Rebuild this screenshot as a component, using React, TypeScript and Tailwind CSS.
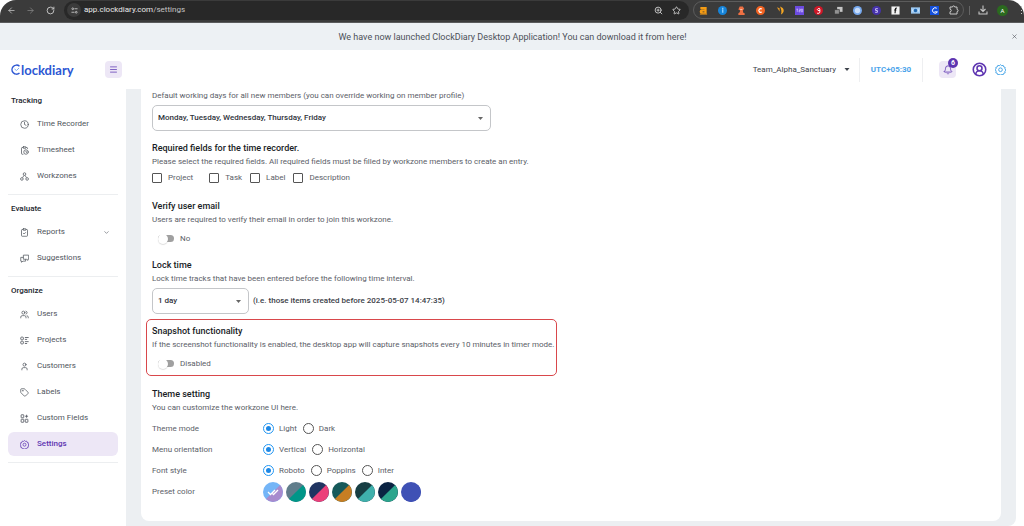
import React, { useState } from "react";
import {
  ArrowLeft,
  ArrowRight,
  Bell,
  ChevronDown,
  CircleUserRound,
  ClipboardClock,
  ClipboardCheck,
  Clock,
  Menu,
  RotateCw,
  Star,
  Tag,
  User,
  Users,
  X,
  ZoomIn,
} from "lucide-react";

type IconProps = { className?: string };

function WorkzonesIcon({ className }: IconProps) {
  return (
    <svg viewBox="0 0 24 24" fill="none" stroke="currentColor" strokeWidth="2" className={className} aria-hidden="true">
      <circle cx="12" cy="5.5" r="3.5" />
      <circle cx="5" cy="18.5" r="3.5" />
      <circle cx="19" cy="18.5" r="3.5" />
      <path d="M10.500 9L7 15M13.500 9l3.500 6" />
    </svg>
  );
}

function ProjectsIcon({ className }: IconProps) {
  return (
    <svg viewBox="0 0 24 24" fill="none" stroke="currentColor" strokeWidth="2.200" className={className} aria-hidden="true">
      <rect x="2" y="3" width="7" height="7" rx="2" />
      <rect x="2" y="14" width="7" height="7" rx="2" />
      <path d="M13 4h10M13 9h6M13 15h10M13 20h6" />
    </svg>
  );
}

function FieldsIcon({ className }: IconProps) {
  return (
    <svg viewBox="0 0 24 24" fill="none" stroke="currentColor" strokeWidth="2.200" className={className} aria-hidden="true">
      <rect x="3" y="2" width="7" height="8" rx="1" />
      <rect x="3" y="14" width="7" height="8" rx="1" />
      <rect x="14" y="14" width="7" height="8" rx="1" />
      <path d="M17.500 2v8M13.500 6h8" />
    </svg>
  );
}

function SuggestionsIcon({ className }: IconProps) {
  return (
    <svg viewBox="0 0 24 24" fill="none" stroke="currentColor" strokeWidth="2" strokeLinejoin="round" className={className} aria-hidden="true">
      <path d="M9 3h14v11h-2v3l-4-3H9z" />
      <path d="M9 9H2v10h2v3l4-3h7v-5" />
    </svg>
  );
}

function GearIcon({ className }: IconProps) {
  return (
    <svg viewBox="0 0 24 24" fill="none" stroke="currentColor" strokeWidth="2" className={className} aria-hidden="true">
      <path
        d="M12 1.500l2.600 2.200 3.300-.6 1.100 3.200 3.200 1.100-.6 3.300 2.200 2.600-2.200 2.600.6 3.300-3.200 1.100-1.100 3.200-3.300-.6L12 24l-2.600-1.100-3.300.6L5 20.300l-3.200-1.100.6-3.300L.500 12l1.900-1.300-.6-3.300L5 6.300l1.100-3.200 3.300.6z"
        strokeLinejoin="round"
      />
      <circle cx="12" cy="12.500" r="4" />
    </svg>
  );
}

function SiteInfoIcon({ className }: IconProps) {
  return (
    <svg viewBox="0 0 16 16" fill="none" stroke="currentColor" strokeWidth="2" className={className} aria-hidden="true">
      <circle cx="4" cy="4" r="2" />
      <circle cx="12" cy="12" r="2" />
      <path d="M8 4h7M1 12h7" />
    </svg>
  );
}

function ExtensionsIcon({ className }: IconProps) {
  return (
    <svg viewBox="0 0 20 20" fill="none" stroke="currentColor" strokeWidth="2" strokeLinejoin="round" className={className} aria-hidden="true">
      <path d="M2 4h5a2.200 2.200 0 0 1 4.400 0H16v5a2.200 2.200 0 0 1 0 4.400V18H2v-4.500a2.500 2.500 0 0 0 0-5z" />
    </svg>
  );
}

function DownloadIcon({ className }: IconProps) {
  return (
    <svg viewBox="0 0 20 20" fill="none" stroke="currentColor" strokeWidth="2.200" className={className} aria-hidden="true">
      <path d="M10 1v11M5 8l5 5 5-5M2 13v5h16v-5" />
    </svg>
  );
}

function Caret({ className }: IconProps) {
  return (
    <svg viewBox="0 0 10 6" fill="currentColor" className={className} aria-hidden="true">
      <path d="M0 0h10L5 6z" />
    </svg>
  );
}

function Extension({ name, children }: { name: string; children: React.ReactNode }) {
  return (
    <button aria-label={name} className="flex size-[10px] items-center justify-center">
      <svg viewBox="0 0 20 20" className="size-[9px]" aria-hidden="true">
        {children}
      </svg>
    </button>
  );
}

function BrowserBar() {
  return (
    <div className="flex h-[23px] items-center rounded-t-[16px] border-b border-[#5a5b5c] bg-[#3b3b3b] pb-[2px] pl-[7px] text-[#c7c7c7]">
      <button aria-label="Back" className="w-[10px]"><ArrowLeft className="size-[9px]" /></button>
      <button aria-label="Forward" className="ml-[9px] w-[10px] text-[#858585]"><ArrowRight className="size-[9px]" /></button>
      <button aria-label="Reload" className="ml-[10px] w-[10px]"><RotateCw className="size-[9px]" strokeWidth={2.5} /></button>
      <div className="ml-[8px] flex h-[19px] min-w-0 flex-1 items-center rounded-full bg-[#282828] pr-[8px] pl-[3px]">
        <button aria-label="Site information" className="flex size-[14px] items-center justify-center rounded-full bg-[#3b3b3b]">
          <SiteInfoIcon className="size-[7px]" />
        </button>
        <span className="ml-[3px] flex-1 text-[8px] leading-[14px] text-[#e8e8e8]">
          app.clockdiary.com<span className="text-[#c4c4c4]">/settings</span>
        </span>
        <button aria-label="Zoom"><ZoomIn className="size-[9px]" strokeWidth={2.5} /></button>
        <button aria-label="Bookmark" className="ml-[9px]"><Star className="size-[9px]" strokeWidth={2.5} /></button>
      </div>
      <div className="ml-[4px] flex h-[18px] w-[271px] items-center justify-between rounded-full border border-[#5c5c5c] px-[4px]">
        <Extension name="Analytics">
          <path d="M3 7V2h14v15H6a4.500 4.500 0 0 1 0-9h6V7zM8 12v2h4v-2z" fill="#f59c14" fillRule="evenodd" />
          <path d="M2 17h16v2H2z" fill="#f59c14" />
        </Extension>
        <Extension name="Info">
          <circle cx="10" cy="10" r="10" fill="#1683d8" />
          <path d="M9 8h3v7H9zM9 4h3v3H9z" fill="#8ed0ff" />
        </Extension>
        <Extension name="Chess">
          <path d="M6 1h7l3 5-3 4 1 5 3 1v4H3v-4l3-2 1-4-4-2z" fill="#ee7043" />
          <path d="M7 7h5v2H7z" fill="#ffd0bb" />
        </Extension>
        <Extension name="Capture">
          <circle cx="10" cy="10" r="10" fill="#f26322" />
          <path d="M13 7a4 4 0 1 0 0 6" fill="none" stroke="#fff" strokeWidth="2.500" />
        </Extension>
        <Extension name="Peel">
          <path d="M2 3l6 2v7z" fill="#e89b25" />
          <path d="M9 1c10 3 11 13 2 18 2-7 1-11-2-18z" fill="#f6a723" />
        </Extension>
        <Extension name="Counter">
          <path d="M0 0h20v20H0z" fill="#6c4be0" />
          <path d="M3 7h4M5 7v6M9 7h3v3H9v3h3M14 7v6h3V7z" fill="none" stroke="#d8ccff" strokeWidth="1.500" />
        </Extension>
        <Extension name="Nine">
          <circle cx="10" cy="10" r="10" fill="#cf1727" />
          <path d="M13 10H9a2.500 2.500 0 1 1 4-2v5c0 3-3 4-6 3" fill="none" stroke="#fff" strokeWidth="2.200" />
        </Extension>
        <Extension name="Copy">
          <path d="M7 2h12v11H7z" fill="#c5c5c5" />
          <path d="M1 8h11v10H1z" fill="#929292" stroke="#333" strokeWidth="1.500" />
        </Extension>
        <Extension name="Globe">
          <circle cx="10" cy="10" r="10" fill="#77a9ee" />
          <circle cx="10" cy="10" r="6" fill="#c8ddfa" />
        </Extension>
        <Extension name="Snippets">
          <circle cx="10" cy="10" r="10" fill="#4632aa" />
          <path d="M13 6H8v4h4v4H7" fill="none" stroke="#d7d0ff" strokeWidth="2" />
        </Extension>
        <Extension name="Fonts">
          <path d="M1 1h18v18H1z" fill="#f2f2f2" />
          <path d="M13 5c-4-1-3 2-4 11M7 9h5" fill="none" stroke="#111" strokeWidth="2.500" />
        </Extension>
        <Extension name="Camera">
          <path d="M0 3h20v14H0z" fill="#9cc7ef" />
          <circle cx="10" cy="10" r="4" fill="#2267ad" />
          <path d="M3 8h2v4H3zM15 8h2v4h-2z" fill="#eef7ff" />
        </Extension>
        <Extension name="Clockdiary">
          <path d="M0 0h20v20H0z" fill="#1450dc" />
          <path d="M15 5a6 6 0 1 0 1 9M10 13h7" fill="none" stroke="#fff" strokeWidth="2.200" />
        </Extension>
        <button aria-label="Extensions"><ExtensionsIcon className="size-[10px]" /></button>
      </div>
      <div className="ml-[5px] h-[9px] w-px bg-[#666]" />
      <button aria-label="Downloads" className="ml-[8px]"><DownloadIcon className="size-[10px]" /></button>
      <button aria-label="Profile" className="ml-[9px] flex size-[11px] items-center justify-center rounded-full bg-[#2b6a1f] text-[6px] leading-[11px] text-white">A</button>
      <button aria-label="More" className="mr-[1px] ml-[13px] grid h-[10px] w-[2px] content-between py-[1px]">
        <span className="size-[1px] bg-[#ccc]" />
        <span className="size-[1px] bg-[#ccc]" />
        <span className="size-[1px] bg-[#ccc]" />
      </button>
    </div>
  );
}

function Banner() {
  return (
    <div className="flex h-[27px] items-center bg-[#edf1f4] pr-[6px] pl-[14px] text-[#4c5058]">
      <p className="flex-1 text-center text-[9px] leading-[14px]">
        We have now launched ClockDiary Desktop Application! You can download it from here!
      </p>
      <button aria-label="Close"><X className="size-[7px]" /></button>
    </div>
  );
}

function Header() {
  return (
    <header className="flex h-[39px] items-center bg-white pr-[18px] pl-[11px]">
      <a href="#home" aria-label="Clockdiary" className="flex w-[94px] items-center text-[#2d57d3]">
        <svg viewBox="0 0 20 22" className="h-[11px] w-[10px]" fill="none" stroke="currentColor" strokeWidth="3" aria-hidden="true">
          <path d="M17 4.500A9 9 0 1 0 17 18" />
          <path d="M7 10l4 3 5-5" strokeWidth="1.800" stroke="#6da5f2" />
        </svg>
        <span className="font-['Lato',sans-serif] text-[13px] leading-[16px] font-bold">lockdiary</span>
      </a>
      <button aria-label="Toggle menu" className="flex size-[17px] items-center justify-center rounded-[4px] bg-[#ede7f6] text-[#7a5bc0]">
        <Menu className="size-[9px]" strokeWidth={2.5} />
      </button>
      <div className="flex-1" />
      <button className="flex items-center gap-[8px] text-[8px] leading-[12px] text-[#3e434b]">
        Team_Alpha_Sanctuary
        <Caret className="h-[3px] w-[6px]" />
      </button>
      <div className="ml-[9px] h-[24px] w-px bg-[#eeeff1]" />
      <span className="w-[62px] text-center text-[8px] leading-[12px] font-bold text-[#4aa3ea]">UTC+05:30</span>
      <div className="h-[24px] w-px bg-[#eeeff1]" />
      <button aria-label="Notifications" className="relative ml-[16px] flex size-[17px] items-center justify-center rounded-[4px] bg-[#ede7f6] text-[#5e35b1]">
        <Bell className="size-[10px]" />
        <span className="absolute -top-[3px] left-[9px] flex size-[10px] items-center justify-center rounded-full bg-[#5e35b1] text-[7px] leading-[10px] font-bold text-white">6</span>
      </button>
      <button aria-label="Account" className="ml-[16px] text-[#5e35b1]"><CircleUserRound className="size-[15px]" strokeWidth={2.5} /></button>
      <button aria-label="Preferences" className="ml-[8px] text-[#3a9fe6]"><GearIcon className="size-[11px]" /></button>
    </header>
  );
}

const menu = [
  {
    title: "Tracking",
    items: [
      { label: "Time Recorder", icon: Clock },
      { label: "Timesheet", icon: ClipboardClock },
      { label: "Workzones", icon: WorkzonesIcon },
    ],
  },
  {
    title: "Evaluate",
    items: [
      { label: "Reports", icon: ClipboardCheck },
      { label: "Suggestions", icon: SuggestionsIcon },
    ],
  },
  {
    title: "Organize",
    items: [
      { label: "Users", icon: Users },
      { label: "Projects", icon: ProjectsIcon },
      { label: "Customers", icon: User },
      { label: "Labels", icon: Tag },
      { label: "Custom Fields", icon: FieldsIcon },
      { label: "Settings", icon: GearIcon },
    ],
  },
];

function Sidebar() {
  return (
    <nav className="w-[126px] shrink-0 bg-white px-[8px]">
      {menu.map((section, index) => (
        <section key={section.title} className={"border-b border-[#eceef0] pb-[6px] " + (index === 0 ? "pt-[5px]" : "pt-[7px]")}>
          <h2 className="pl-[3px] text-[8px] leading-[14px] font-medium text-[#23272f]">{section.title}</h2>
          <ul className="mt-[4px] flex flex-col gap-[2px]">
            {section.items.map(({ label, icon: Icon }) => (
              <li key={label}>
                <a
                  href={"#" + label}
                  className={
                    "flex h-[24px] items-center rounded-[6px] px-[12px] text-[8px] leading-[12px] " +
                    (label === "Settings" ? "bg-[#ede7f6] font-medium text-[#5e35b1]" : "text-[#50555d]")
                  }
                >
                  <Icon className="size-[9px]" />
                  <span className="ml-[8px] flex-1">{label}</span>
                  {label === "Reports" && <ChevronDown className="-mr-[4px] size-[7px]" />}
                </a>
              </li>
            ))}
          </ul>
        </section>
      ))}
    </nav>
  );
}

function Title({ children }: { children: React.ReactNode }) {
  return <h2 className="text-[9px] leading-[14px] font-medium text-[#191d26]">{children}</h2>;
}

function Note({ children }: { children: React.ReactNode }) {
  return <p className="text-[8px] leading-[14px] text-[#5b6068]">{children}</p>;
}

function Dropdown({ label, width, options }: { label: string; width: string; options: string[] }) {
  return (
    <div className={"grid items-center " + width}>
      <select
        aria-label={label}
        className="col-start-1 row-start-1 h-[26px] w-full appearance-none rounded-[5px] border border-[#c4c6c9] bg-white px-[5px] text-[8px] font-medium text-[#30343c]"
      >
        {options.map((option) => (
          <option key={option}>{option}</option>
        ))}
      </select>
      <Caret className="pointer-events-none col-start-1 row-start-1 mr-[8px] h-[3px] w-[5px] justify-self-end text-[#666]" />
    </div>
  );
}

function Toggle({ on, off }: { on: string; off: string }) {
  const [checked, setChecked] = useState(false);
  return (
    <label className="flex h-[23px] items-center gap-[6px] pl-[6px] text-[8px] leading-[12px] text-[#5b6068]">
      <input
        type="checkbox"
        role="switch"
        checked={checked}
        onChange={() => setChecked(!checked)}
        className="flex h-[7px] w-[16px] appearance-none items-center rounded-full bg-[#a0a0a0] before:size-[10px] before:shrink-0 before:rounded-full before:bg-white before:shadow-[0_1px_1px_#0002] checked:justify-end checked:bg-[#90caf9]"
      />
      {checked ? on : off}
    </label>
  );
}

function Radios({ label, name, options }: { label: string; name: string; options: string[] }) {
  return (
    <div role="radiogroup" aria-label={label} className="flex h-[21px] items-center text-[8px] leading-[12px] text-[#5b6068]">
      <span className="w-[111px]">{label}</span>
      <div className="flex gap-[6px]">
        {options.map((option, index) => (
          <label key={option} className="flex items-center gap-[5px]">
            <input
              type="radio"
              name={name}
              defaultChecked={index === 0}
              className="grid size-[11px] appearance-none place-items-center rounded-full border border-[#555] checked:border-[#2196f3] checked:before:size-[5px] checked:before:rounded-full checked:before:bg-[#1e88e5]"
            />
            {option}
          </label>
        ))}
      </div>
    </div>
  );
}

const presets = [
  ["#74b5f7", "#a78bce"],
  ["#607d8b", "#009688"],
  ["#203461", "#ec407a"],
  ["#16595a", "#c77e23"],
  ["#173e43", "#3fb0ac"],
  ["#0a2342", "#2ca58d"],
  ["#3f51b5", "#3f51b5"],
];

function SettingsCard() {
  return (
    <div className="rounded-b-[8px] bg-white px-[11px] pb-[19px]">
      <Note>Default working days for all new members (you can override working on member profile)</Note>
      <div className="mt-[2px]">
        <Dropdown label="Working days" width="w-[339px]" options={["Monday, Tuesday, Wednesday, Thursday, Friday"]} />
      </div>

      <section className="mt-[10px]">
        <Title>Required fields for the time recorder.</Title>
        <Note>Please select the required fields. All required fields must be filled by workzone members to create an entry.</Note>
        <div className="flex h-[18px] items-center gap-[8px] text-[8px] leading-[12px] text-[#5b6068]">
          {["Project", "Task", "Label", "Description"].map((field) => (
            <label key={field} className="flex items-center gap-[6px] first:mr-[8px]">
              <input type="checkbox" className="size-[10px] appearance-none rounded-[1px] border border-[#555] checked:bg-[#2196f3]" />
              {field}
            </label>
          ))}
        </div>
      </section>

      <section className="mt-[12px]">
        <Title>Verify user email</Title>
        <Note>Users are required to verify their email in order to join this workzone.</Note>
        <Toggle on="Yes" off="No" />
      </section>

      <section className="mt-[8px]">
        <Title>Lock time</Title>
        <Note>Lock time tracks that have been entered before the following time interval.</Note>
        <div className="mt-[2px] flex items-center gap-[4px]">
          <Dropdown label="Lock time interval" width="w-[97px]" options={["1 day", "2 days", "1 week"]} />
          <span className="text-[8px] leading-[12px] font-medium text-[#3b4048]">(i.e. those items created before 2025-05-07 14:47:35)</span>
        </div>
      </section>

      <section className="-ml-[6px] mt-[5px] w-fit rounded-[5px] border border-[#d9474b] pt-[4px] pr-[2px] pl-[5px]">
        <Title>Snapshot functionality</Title>
        <Note>If the screenshot functionality is enabled, the desktop app will capture snapshots every 10 minutes in timer mode.</Note>
        <Toggle on="Enabled" off="Disabled" />
      </section>

      <section className="mt-[11px]">
        <Title>Theme setting</Title>
        <Note>You can customize the workzone UI here.</Note>
        <div className="mt-[3px]">
          <Radios label="Theme mode" name="mode" options={["Light", "Dark"]} />
          <Radios label="Menu orientation" name="orientation" options={["Vertical", "Horizontal"]} />
          <Radios label="Font style" name="font" options={["Roboto", "Poppins", "Inter"]} />
          <div className="flex h-[21px] items-center text-[8px] leading-[12px] text-[#5b6068]">
            <span className="w-[111px]">Preset color</span>
            <div className="flex gap-[3px]">
              {presets.map(([from, to], index) => (
                <button key={from} aria-label={"Preset " + (index + 1)} className="size-[20px]">
                  <svg viewBox="0 0 20 20" className="size-[20px]" aria-hidden="true">
                    <circle cx="10" cy="10" r="10" fill={from} />
                    <path d="M17.070 2.930A10 10 0 0 1 2.930 17.070z" fill={to} />
                    {index === 0 && (
                      <path d="M5 10l2.500 2.500L12 8M9 11l1.500 1.500L15 8" fill="none" stroke="#fff" strokeWidth="1.300" />
                    )}
                  </svg>
                </button>
              ))}
            </div>
          </div>
        </div>
      </section>
    </div>
  );
}

export default function App() {
  return (
    <div className="flex min-h-screen flex-col bg-white font-['Roboto',sans-serif]">
      <BrowserBar />
      <Banner />
      <Header />
      <div className="flex flex-1 pr-[8px]">
        <Sidebar />
        <main className="min-w-0 flex-1 rounded-br-[8px] bg-[#eceff2] px-[15px] pb-[5px]">
          <SettingsCard />
        </main>
      </div>
    </div>
  );
}
